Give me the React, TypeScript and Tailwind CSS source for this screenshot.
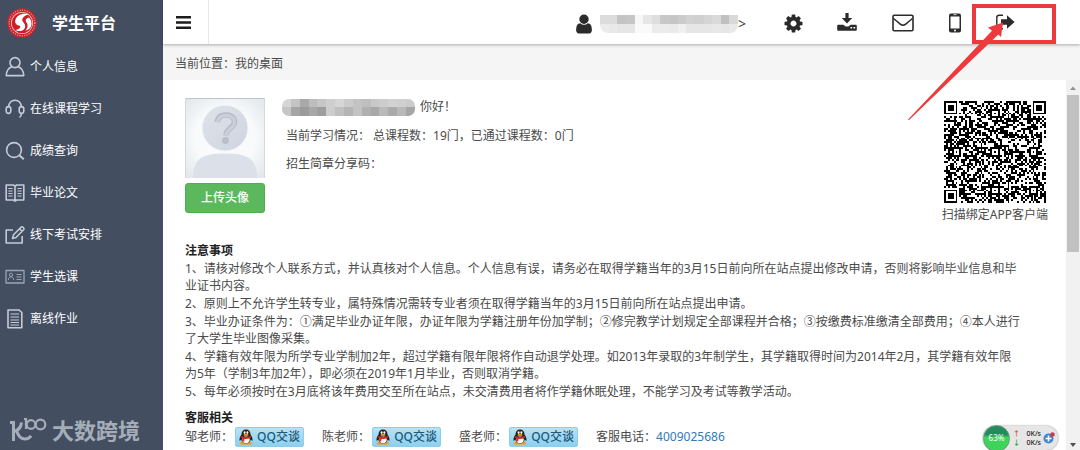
import type { ReactNode } from "react";

const DARK = "#2b2b2b";

const NAME_TOP = ["#dcdcdc", "#dcdcdc", "#c4c4c4", "#c6c6c6", "#f7f7f7", "#e6e6e6", "#dedede", "#c8c8c8", "#c6c6c6", "#cbcbcb", "#d2d2d2", "#d0d0d0", "#d5d5d5", "#dadada", "#c2bfc0", "#d9d9d9"];
const NAME_BOTTOM = ["#ececec", "#e9e9e9", "#e6e6e6", "#e6e6e6", "#fafafa", "#fafafa", "#ececec", "#ebebeb", "#eaeaea", "#f0f0f0", "#e6e6e6", "#e6e6e6", "#e6e6e6", "#e8e8e8", "#e6e6e6", "#e9e9e9"];
const HELLO_TOP = ["#d5d5d5", "#c4c4c4", "#a9a9a9", "#bdbdbd", "#c6c6c6", "#cfcfcf", "#d6d6d6", "#cbcbcb", "#c3c3c3", "#bfbfbf", "#c8c8c8", "#cdcdcd", "#d2d2d2", "#d0d0d0", "#cccccc"];
const HELLO_BOTTOM = ["#c6c6c6", "#a5a5a5", "#9b9b9b", "#a8a8a8", "#9e9e9e", "#cdcdcd", "#c0c0c0", "#b5b5b5", "#c3c3c3", "#b0b0b0", "#a8a8a8", "#bababa", "#aaaaaa", "#b9b9b9", "#a6a6a6"];

function Mosaic({ rows, className }: { rows: string[][]; className: string }) {
  return (
    <div className={`flex flex-col overflow-hidden ${className}`} aria-hidden="true">
      {rows.map((row, i) => (
        <div key={i} className="flex flex-1">
          {row.map((color, j) => (
            <span key={j} className="flex-1" style={{ background: color }} />
          ))}
        </div>
      ))}
    </div>
  );
}

/* ---------- sidebar ---------- */

function LineIcon({ children }: { children: ReactNode }) {
  return (
    <svg width="20" height="22" viewBox="0 0 20 22" fill="none" stroke="#c3cbd8" strokeWidth="1.6" strokeLinejoin="round" className="shrink-0">
      {children}
    </svg>
  );
}

const NAV: { label: string; icon: ReactNode }[] = [
  {
    label: "个人信息",
    icon: (
      <>
        <circle cx="10" cy="6.600" r="5" />
        <path d="M6.800 10.800C3.500 12 1.500 15 1.200 19.600h17.600C18.500 15 16.500 12 13.200 10.800" />
      </>
    ),
  },
  {
    label: "在线课程学习",
    icon: (
      <>
        <path d="M3.500 9C4 4.500 6.500 2.200 10 2.200S16 4.500 16.500 9" />
        <rect x="1.200" y="8.600" width="4.600" height="6.800" rx="2.300" />
        <rect x="14.200" y="8.600" width="4.600" height="6.800" rx="2.300" />
        <path d="M16.500 15.400c0 2-.6 3-2 4" />
      </>
    ),
  },
  {
    label: "成绩查询",
    icon: (
      <>
        <circle cx="9" cy="10" r="7.400" />
        <path d="M14.200 15.200l4.600 4" strokeWidth="2" />
      </>
    ),
  },
  {
    label: "毕业论文",
    icon: (
      <>
        <path d="M1.200 3h7l1.800 1 1.800-1h7v15h-7l-1.800 1-1.800-1h-7zM10 4v15" />
        <path d="M3.300 6.500h4.200M3.300 9h4.200M3.300 11.500h4.200M3.300 14h4.200M12.500 6.500h4.200M12.500 9h4.200M12.500 11.500h4.200M12.500 14h4.200" strokeWidth="1" />
      </>
    ),
  },
  {
    label: "线下考试安排",
    icon: (
      <>
        <path d="M8 6H1.200v13h16v-7" />
        <path d="M7.500 14.500l1-3.800 7.500-7.500c1.400-1 3.800 1 2.600 2.600L11 13.500zM14.500 4.800l2.600 2.600" />
      </>
    ),
  },
  {
    label: "学生选课",
    icon: (
      <g stroke="#9aa5b7">
        <rect x="1" y="4.500" width="18" height="12.500" strokeWidth="1.300" />
        <circle cx="6" cy="8.800" r="1.600" strokeWidth="1" />
        <path d="M3.300 14c.2-2.200 1.200-3.200 2.700-3.200s2.500 1 2.700 3.200M11.500 8.500h5M11.500 11h5M11.500 13.500h5" strokeWidth="1" />
      </g>
    ),
  },
  {
    label: "离线作业",
    icon: (
      <>
        <path d="M3 2h11l2.800 2.500V19.800H3z" />
        <path d="M5.500 6h8.500M5.500 9h8.500M5.500 12h8.500M5.500 14.500h8.500M5.500 17h8.500" strokeWidth="1" />
      </>
    ),
  },
];

function SchoolLogo() {
  return (
    <svg width="30" height="30" viewBox="0 0 30 30" className="shrink-0" aria-hidden="true">
      <circle cx="15" cy="15" r="14.800" fill="#c8232b" />
      <circle cx="15" cy="15" r="12.800" fill="none" stroke="#e79a98" strokeWidth="1.400" strokeDasharray="1 1.400" />
      <circle cx="15" cy="15" r="11" fill="#f3d5d4" />
      <circle cx="15" cy="15" r="10.300" fill="#cb1f27" />
      {/* flame shape: two interlocked tongues */}
      <path d="M21.500 6.300c-5-1.800-11.300.2-13 5.200-1.100 3.300.6 5.600 3.300 5.900 1.300.1 1.700.9 1.200 2-.7 1.500-2.600 2.500-4.600 2.500 5 2.800 9.700.3 9.800-3.700 0-2.700-2-3.600-2.700-5.200-1-2.600 2-5.500 6-6.700z" fill="#fff" />
      <path d="M21.800 9.500c-2.400.8-3.500 2.200-3 3.700.5 1.300 1.900 2.200 1.800 4.600-.1 2-1 3.500-2.300 4.800 4-1 6.200-3.700 6.200-7.200 0-2.200-.9-4.400-2.700-5.900z" fill="#fff" />
    </svg>
  );
}

function Sidebar() {
  return (
    <aside className="flex w-[163px] shrink-0 flex-col bg-[#434e61] text-white">
      <div className="flex h-11 items-center gap-[15px] pl-[7px] pt-[2px]">
        <SchoolLogo />
        <h1 className="text-[16px] font-bold leading-5">学生平台</h1>
      </div>
      <nav className="pt-[2px]">
        {NAV.map((item) => (
          <a key={item.label} href="#" className="flex h-[42px] items-center gap-[5px] pl-[5px]">
            <LineIcon>{item.icon}</LineIcon>
            {item.label}
          </a>
        ))}
      </nav>
      <div className="mt-auto flex items-center gap-[5px] pb-[6px] pl-[9px] text-[#a5adb9]">
        <svg width="38" height="26" viewBox="0 0 38 26" fill="none" stroke="currentColor" strokeWidth="3" aria-hidden="true">
          <path d="M1 5.500h3.500V24M12.500 5.500C12 11 9.500 13.500 4.500 14.500M7.500 13.500c1.500 5 4 8.500 8.500 8.500 2.600 0 4.600-1 6-3.300" />
          <path d="M15 2h2v10" strokeWidth="2.200" />
          <circle cx="22" cy="7.500" r="4.300" strokeWidth="2.200" />
          <circle cx="31.500" cy="7.500" r="4.800" strokeWidth="2.200" />
        </svg>
        <span className="text-[22px] font-bold leading-7">大数跨境</span>
      </div>
    </aside>
  );
}

/* ---------- top bar ---------- */

function Glyph({ d, size }: { d: string; size: number }) {
  return (
    <svg width={size} height={size} viewBox="0 0 1792 1792" fill={DARK} aria-hidden="true">
      <path d={d} />
    </svg>
  );
}

const USER = "M1536 1399q0 109-62.500 187t-150.500 78h-854q-88 0-150.500-78t-62.500-187q0-85 8.500-160.500t31.500-152 58.500-131 94-89 134.500-34.500q131 128 313 128t313-128q76 0 134.500 34.500t94 89 58.500 131 31.500 152 8.500 160.500zm-256-887q0 159-112.500 271.500t-271.500 112.500-271.500-112.500-112.500-271.500 112.500-271.500 271.500-112.500 271.500 112.500 112.500 271.500z";
const COG = "M1152 896q0-106-75-181t-181-75-181 75-75 181 75 181 181 75 181-75 75-181zm512-109v222q0 12-8 23t-20 13l-185 28q-19 54-39 91 35 50 107 138 10 12 10 25t-9 23q-27 37-99 108t-94 71q-12 0-26-9l-138-108q-44 23-91 38-16 136-29 186-7 28-36 28h-222q-14 0-24.500-8.500t-11.500-21.500l-28-184q-49-16-90-37l-141 107q-10 9-25 9-14 0-25-11-126-114-165-168-7-10-7-23 0-12 8-23 15-21 51-66.500t54-70.500q-27-50-41-99l-183-27q-13-2-21-12.500t-8-23.500v-222q0-12 8-23t19-13l186-28q14-46 39-92-40-57-107-138-10-12-10-24 0-10 9-23 26-36 98.500-107.500t94.500-71.500q13 0 26 10l138 107q44-23 91-38 16-136 29-186 7-28 36-28h222q14 0 24.500 8.500t11.500 21.500l28 184q49 16 90 37l142-107q9-9 24-9 13 0 25 10 129 119 165 170 7 8 7 22 0 12-8 23-15 21-51 66.500t-54 70.500q26 50 41 98l183 28q13 2 21 12.500t8 23.500z";

function TopBar() {
  return (
    <header className="relative z-10 flex h-11 shrink-0 items-center bg-white shadow-[0_1px_3px_rgba(0,0,0,0.3)]">
      <button type="button" aria-label="菜单" className="flex h-11 w-[46px] items-center border-r border-[#e7e7e7] pl-[13px]">
        <svg width="15" height="13" viewBox="0 0 15 13" fill="#1c1c1c">
          <path d="M0 0h15v2.500H0zM0 5.200h15v2.500H0zM0 10.400h15v2.500H0z" />
        </svg>
      </button>

      <div className="ml-auto flex items-center pr-[48px]">
        <a href="#" aria-label="个人中心" className="mr-[18px] flex items-center pt-[3px]">
          <Glyph d={USER} size={22} />
          <Mosaic rows={[NAME_TOP, NAME_BOTTOM]} className="ml-[5px] h-[18px] w-[138px] rounded-b-[8px]" />
          <span className="w-[10px] text-[14px] leading-5 text-[#444]">&gt;</span>
        </a>
        <button type="button" aria-label="设置" className="flex w-[54px] justify-center pt-[2px]">
          <Glyph d={COG} size={21} />
        </button>
        <button type="button" aria-label="下载" className="flex w-[54px] justify-center">
          <svg width="20" height="20" viewBox="0 0 20 20" fill={DARK}>
            <path d="M8.400 1h3.200v5h3.600L10 11.600 4.800 6h3.600z" />
            <path fillRule="evenodd" d="M1.200 12.800h5.200l2.200 1.600h2.800l2.200-1.600h5.200q1 0 1 1v4q0 1-1 1H1.200q-1 0-1-1v-4q0-1 1-1zM13.500 15v1.600h1.700V15zm3 0v1.600h1.700V15z" />
          </svg>
        </button>
        <button type="button" aria-label="邮件" className="flex w-[58px] justify-center pt-[2px]">
          <svg width="22" height="18" viewBox="0 0 22 18" fill="none" stroke={DARK} strokeWidth="1.600" strokeLinejoin="round">
            <rect x="1" y="1.200" width="20" height="15.600" rx="1.200" />
            <path d="M1.500 4.500C4 6.500 6 8.200 8.300 10.200q2.700 2 5.400 0C16 8.200 18 6.500 20.500 4.500" />
          </svg>
        </button>
        <button type="button" aria-label="手机" className="flex w-[46px] justify-center pt-[2px]">
          <svg width="12" height="20" viewBox="0 0 12 20">
            <rect x="0" y="0.500" width="12" height="19" rx="2" fill={DARK} />
            <rect x="1.500" y="3.500" width="9" height="12" fill="#fff" />
            <path d="M4.500 1.700h3" stroke="#fff" strokeWidth="0.800" />
            <circle cx="6" cy="17.500" r="1" fill="#fff" />
          </svg>
        </button>
        <button type="button" aria-label="退出" className="flex w-[54px] justify-center">
          <svg width="20" height="16" viewBox="0 0 20 16">
            <path d="M8 1.200H4.200Q1.800 1.200 1.800 3.600v8.800q0 2.400 2.400 2.400H8" fill="none" stroke={DARK} strokeWidth="1.400" />
            <path d="M6 5.200h6V1.300L19.600 8 12 14.700v-3.900H6z" fill={DARK} />
          </svg>
        </button>
      </div>

      {/* callout on the sign-out button */}
      <div className="pointer-events-none absolute right-6 top-1 h-10 w-[84px] border-4 border-[#ee3a3c]" />
      <svg width="100" height="102" viewBox="0 0 100 102" className="pointer-events-none absolute right-[74px] top-5" fill="#ee3a3c" aria-hidden="true">
        <path d="M97 2.500L82 7.500l4 3.200L2 99.500l.8.700L92.300 14.500l2.700 2.500z" />
      </svg>
    </header>
  );
}

/* ---------- QR code ---------- */

const QR_SIZE = 53;
const FINDERS = [[3, 3], [49, 3], [3, 49]];
const ALIGN = [[26, 6], [6, 26], [26, 26], [46, 26], [26, 46], [46, 46]];

function noise(x: number, y: number) {
  let h = Math.imul(x + 11, 374761393) + Math.imul(y + 7, 668265263);
  h = Math.imul(h ^ (h >>> 13), 1274126177);
  return ((h ^ (h >>> 16)) >>> 0) / 4294967296;
}

function qrPath() {
  let d = "";
  for (let y = 0; y < QR_SIZE; y++) {
    for (let x = 0; x < QR_SIZE; x++) {
      let on = noise(x, y) < 0.54;
      if (x === 6 || y === 6) on = (x + y) % 2 === 0;
      for (const [cx, cy] of ALIGN) {
        const r = Math.max(Math.abs(x - cx), Math.abs(y - cy));
        if (r <= 2) on = r !== 1;
      }
      for (const [cx, cy] of FINDERS) {
        const r = Math.max(Math.abs(x - cx), Math.abs(y - cy));
        if (r <= 4) on = r !== 2 && r !== 4;
      }
      if (on) d += `M${x} ${y}h1v1h-1z`;
    }
  }
  return d;
}

const QR_PATH = qrPath();

/* ---------- content ---------- */

function Avatar() {
  return (
    <svg width="80" height="80" viewBox="0 0 80 80" role="img" aria-label="头像">
      <defs>
        <radialGradient id="avatarBg" cx="0.5" cy="0.5" r="0.75">
          <stop offset="0.5" stopColor="#f8fafb" />
          <stop offset="1" stopColor="#dce2e7" />
        </radialGradient>
        <linearGradient id="head" x1="0" y1="0" x2="1" y2="1">
          <stop offset="0" stopColor="#dfe3ea" />
          <stop offset="1" stopColor="#ced4df" />
        </linearGradient>
      </defs>
      <rect width="80" height="80" fill="url(#avatarBg)" />
      <path d="M0 .5h80" stroke="#bcc5cd" />
      <path d="M.5 0v80M79.500 0v80" stroke="#d3dadf" />
      <path d="M8 80c0-10 3-18 10-21 6-3 13-3.500 22-3.500s16 .5 22 3.500c7 3 10 11 10 21z" fill="#dce0e9" />
      <circle cx="40" cy="30" r="23" fill="url(#head)" stroke="#f5f7f9" />
      <path d="M32 24c1-5 4.500-7 9-7 5 0 8.500 2.700 8.500 7 0 6-8.500 6.500-8.500 13.500" fill="none" stroke="#b3bac6" strokeWidth="5.500" />
      <path d="M32 24.500c1-5 4.500-7 9-7 5 0 8.500 2.700 8.500 7 0 6-8.500 6.500-8.500 13.500" fill="none" stroke="#c9cfd9" strokeWidth="3.500" />
      <circle cx="40.500" cy="42.500" r="3.400" fill="#b8bfca" />
    </svg>
  );
}

function Penguin() {
  return (
    <svg width="14" height="16" viewBox="0 0 14 16" aria-hidden="true">
      <ellipse cx="4" cy="14.300" rx="3.200" ry="1.500" fill="#f3a11d" />
      <ellipse cx="10" cy="14.300" rx="3.200" ry="1.500" fill="#f3a11d" />
      <path d="M7 .5c-3 0-4.500 2-4.500 5C1 7.500.3 9.500.5 11.500c.5.500 1.200-.2 1.700-1 .8 3 2.500 4 4.800 4s4-1 4.800-4c.5.800 1.200 1.500 1.700 1 .2-2-.5-4-2-6 0-3-1.500-5-4.500-5z" fill="#222" />
      <ellipse cx="7" cy="10.800" rx="3.700" ry="3.400" fill="#fff" />
      <ellipse cx="5.600" cy="3.600" rx="1" ry="1.400" fill="#fff" />
      <ellipse cx="8.400" cy="3.600" rx="1" ry="1.400" fill="#fff" />
      <ellipse cx="7" cy="5.900" rx="2.600" ry=".9" fill="#f6a81c" />
      <path d="M2.300 7q4.700 2.200 9.400 0l.3 1.800q-3 1.500-6.500 1.200l-.3 2.500-2-.3.200-2.600-1.300-.8z" fill="#e02a1f" />
    </svg>
  );
}

function Notes() {
  return (
    <section className="mt-[18px] flex flex-col gap-px leading-[17px]">
      <h2 className="font-bold text-[#222]">注意事项</h2>
      <p>
        1、请核对修改个人联系方式，并认真核对个人信息。个人信息有误，请务必在取得学籍当年的3月15日前向所在站点提出修改申请，否则将影响毕业信息和毕
        <br />
        业证书内容。
      </p>
      <p>2、原则上不允许学生转专业，属特殊情况需转专业者须在取得学籍当年的3月15日前向所在站点提出申请。</p>
      <p>
        3、毕业办证条件为：①满足毕业办证年限，办证年限为学籍注册年份加学制；②修完教学计划规定全部课程并合格；③按缴费标准缴清全部费用；④本人进行
        <br />
        了大学生毕业图像采集。
      </p>
      <p>
        4、学籍有效年限为所学专业学制加2年，超过学籍有限年限将作自动退学处理。如2013年录取的3年制学生，其学籍取得时间为2014年2月，其学籍有效年限
        <br />
        为5年（学制3年加2年），即必须在2019年1月毕业，否则取消学籍。
      </p>
      <p>5、每年必须按时在3月底将该年费用交至所在站点，未交清费用者将作学籍休眠处理，不能学习及考试等教学活动。</p>
    </section>
  );
}

function Support() {
  return (
    <section className="mt-[9px]">
      <h2 className="font-bold leading-[17px] text-[#222]">客服相关</h2>
      <div className="mt-px flex items-center">
        {["邹老师", "陈老师", "盛老师"].map((name) => (
          <div key={name} className="mr-[18px] flex items-center gap-[2px]">
            {name}：
            <button
              type="button"
              className="flex h-5 w-[69px] items-center justify-center gap-1 rounded-[2px] border border-[#8fcdea] bg-linear-to-b from-[#b5e3f8] to-[#8dcff0] font-medium text-[#1d5877]"
            >
              <Penguin />
              QQ交谈
            </button>
          </div>
        ))}
        <span>
          客服电话：
          <a href="tel:4009025686" className="text-[#337ab7]">4009025686</a>
        </span>
      </div>
    </section>
  );
}

function ScrollTrack() {
  return (
    <div className="flex w-[14px] shrink-0 flex-col items-center bg-[#f1f1f1]" aria-hidden="true">
      <svg width="14" height="15" viewBox="0 0 14 15" fill="#8f8f8f">
        <path d="M4 10l3-3.500L10 10z" />
      </svg>
      <div className="h-[157px] w-3 bg-[#c1c1c1]" />
      <svg width="14" height="11" viewBox="0 0 14 11" fill="#505050" className="mt-auto">
        <path d="M4 4h6L7 8z" />
      </svg>
    </div>
  );
}

function SpeedWidget() {
  return (
    <div className="absolute bottom-0 right-[22px] flex h-6 w-[75px] items-center rounded-full bg-[#e6e6e6] shadow-[0_0_2px_rgba(0,0,0,0.5)]">
      <div className="flex size-[27px] shrink-0 items-center justify-center rounded-full border border-[#5e9d78] bg-linear-to-b from-[#258b5f] from-35% to-[#3ed45a] to-45% text-[8px] text-white">
        63%
      </div>
      <div className="ml-[3px] text-[7px] font-medium leading-[9px] text-[#222]">
        <div className="flex w-[28px] justify-between">
          <span className="font-bold text-[#e2502c]">↑</span>0K/s
        </div>
        <div className="flex w-[28px] justify-between">
          <span className="font-bold text-[#2b9a4a]">↓</span>0K/s
        </div>
      </div>
      <svg width="12" height="12" viewBox="0 0 12 12" className="ml-[2px] shrink-0">
        <circle cx="5.500" cy="6.500" r="5" fill="#3d86dc" />
        <path d="M5.500 3.500v6M2.500 6.500h6" stroke="#fff" strokeWidth="1.600" />
        <circle cx="9.500" cy="2.500" r="2.200" fill="#d9343a" />
      </svg>
    </div>
  );
}

export default function App() {
  return (
    <div className="flex h-screen overflow-hidden bg-white font-['Noto_Sans','Noto_Sans_CJK_SC',sans-serif] text-[12px] text-[#4a4a4a]">
      <Sidebar />
      <div className="relative flex min-w-0 flex-1 flex-col">
        <TopBar />
        <div className="flex h-9 shrink-0 items-center bg-[#f5f5f5] pl-3 pt-[3px]">当前位置：我的桌面</div>

        <div className="flex min-h-0 flex-1">
          <main className="min-w-0 flex-1 overflow-hidden pl-[22px] pr-[18px] pt-[18px]">
            <div className="flex items-start">
              <div className="flex w-20 flex-col gap-[5px]">
                <Avatar />
                <button type="button" className="h-[30px] rounded-[3px] border border-[#4cae4c] bg-[#5cb85c] font-medium text-white">
                  上传头像
                </button>
              </div>
              <div className="ml-[17px]">
                <div className="flex h-[18px] items-center gap-[5px]">
                  <Mosaic rows={[HELLO_TOP, HELLO_BOTTOM]} className="h-[17px] w-[133px] rounded-[7px]" />
                  你好！
                </div>
                <p className="mt-[10px] pl-1 leading-5">当前学习情况： 总课程数：19门，已通过课程数：0门</p>
                <p className="mt-2 pl-1 leading-5">招生简章分享码：</p>
              </div>
              <figure className="ml-auto flex flex-col items-center gap-[3px] pt-[3px]">
                <svg width="102" height="102" viewBox="0 0 53 53" fill="#000" shapeRendering="crispEdges" role="img" aria-label="二维码">
                  <path d={QR_PATH} />
                </svg>
                <figcaption className="leading-[18px]">扫描绑定APP客户端</figcaption>
              </figure>
            </div>
            <Notes />
            <Support />
          </main>
          <ScrollTrack />
        </div>
        <SpeedWidget />
      </div>
    </div>
  );
}
